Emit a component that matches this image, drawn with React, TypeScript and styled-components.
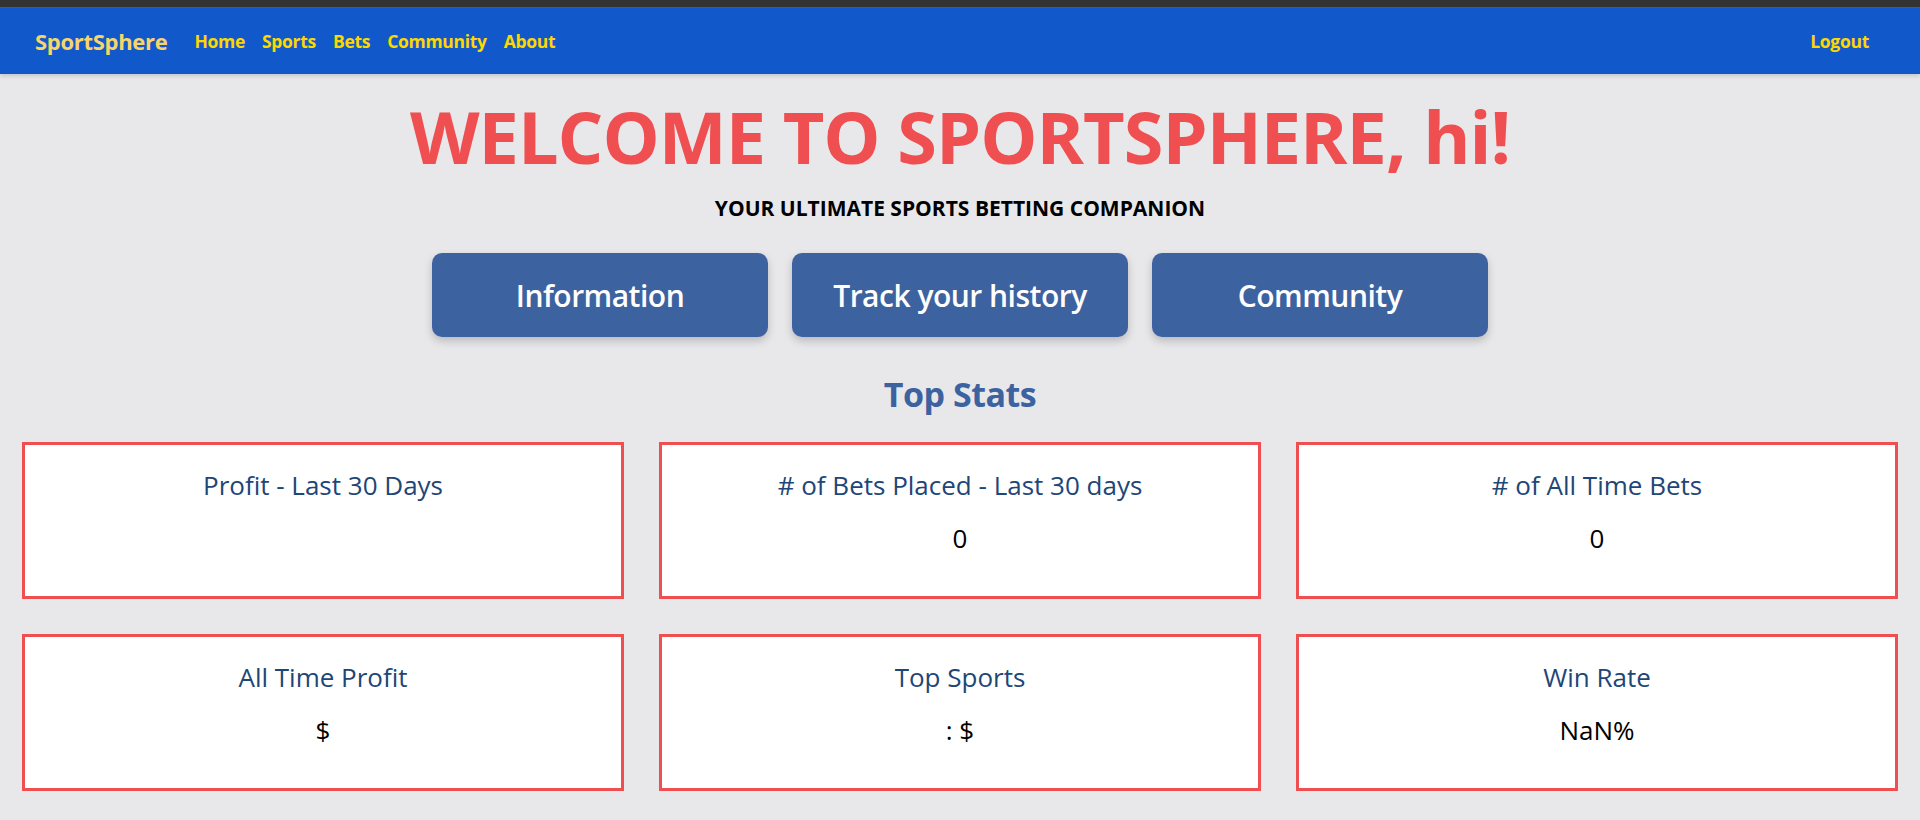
import React from 'react';
import styled, { createGlobalStyle } from 'styled-components';

const GlobalStyle = createGlobalStyle`
  body {
    margin: 0;
    background: #e8e8eb;
    font-family: 'Open Sans', 'Noto Sans', sans-serif;
  }
`;

const WindowStrip = styled.div`
  height: 7px;
  background: #333333;
  border-bottom: 1px solid #5a5a5a;
`;

const Navbar = styled.nav`
  height: 66px;
  background: #1159cb;
  display: flex;
  align-items: center;
  justify-content: space-between;
  padding: 0 51px 0 35px;
  box-shadow: 0 2px 4px rgba(0, 0, 0, 0.15);
`;

const NavLeft = styled.div`
  display: flex;
  align-items: center;
  gap: 17px;
`;

const Brand = styled.a`
  font-size: 22px;
  font-weight: 700;
  color: #f7d56b;
  margin-right: 10px;
  letter-spacing: -0.3px;
`;

const NavLink = styled.a`
  font-size: 17.5px;
  font-weight: 700;
  color: #ffd700;
  letter-spacing: -0.3px;
`;

const Main = styled.main`
  display: flex;
  flex-direction: column;
  align-items: center;
`;

const Title = styled.h1`
  margin: 19px 0 0;
  font-size: 72px;
  line-height: 86px;
  font-weight: 700;
  color: #ef4f50;
  letter-spacing: -1px;
`;

const Subtitle = styled.p`
  margin: 16px 0 0;
  font-size: 21px;
  line-height: 26px;
  font-weight: 700;
  color: #000;
`;

const ButtonRow = styled.div`
  display: flex;
  gap: 24px;
  margin-top: 32px;
`;

const ActionButton = styled.button`
  width: 336px;
  height: 84px;
  border: none;
  border-radius: 10px;
  background: #3d62a0;
  color: #fff;
  font-family: inherit;
  font-size: 30px;
  font-weight: 600;
  letter-spacing: -0.5px;
  box-shadow: 0 4px 8px rgba(0, 0, 0, 0.2);
  cursor: pointer;
`;

const SectionTitle = styled.h2`
  margin: 35px 0 0;
  font-size: 34px;
  line-height: 44px;
  font-weight: 700;
  color: #3d62a0;
  letter-spacing: -0.5px;
`;

const StatsGrid = styled.div`
  display: grid;
  grid-template-columns: repeat(3, 1fr);
  gap: 35px 35px;
  padding: 0 22px;
  margin-top: 26px;
  align-self: stretch;
`;

const StatCard = styled.div`
  height: 157px;
  box-sizing: border-box;
  background: #fff;
  border: 3px solid #ef4f50;
  padding-top: 24px;
  text-align: center;
`;

const StatLabel = styled.h3`
  margin: 0;
  font-size: 26px;
  line-height: 32px;
  font-weight: 500;
  color: #1e4676;
`;

const StatValue = styled.p`
  margin: 21px 0 0;
  font-size: 26px;
  line-height: 32px;
  color: #000;
`;

const stats = [
  { label: 'Profit - Last 30 Days', value: '' },
  { label: '# of Bets Placed - Last 30 days', value: '0' },
  { label: '# of All Time Bets', value: '0' },
  { label: 'All Time Profit', value: '$' },
  { label: 'Top Sports', value: ': $' },
  { label: 'Win Rate', value: 'NaN%' },
];

export default function App() {
  return (
    <>
      <GlobalStyle />
      <WindowStrip />
      <Navbar>
        <NavLeft>
          <Brand>SportSphere</Brand>
          <NavLink>Home</NavLink>
          <NavLink>Sports</NavLink>
          <NavLink>Bets</NavLink>
          <NavLink>Community</NavLink>
          <NavLink>About</NavLink>
        </NavLeft>
        <NavLink>Logout</NavLink>
      </Navbar>
      <Main>
        <Title>WELCOME TO SPORTSPHERE, hi!</Title>
        <Subtitle>YOUR ULTIMATE SPORTS BETTING COMPANION</Subtitle>
        <ButtonRow>
          <ActionButton>Information</ActionButton>
          <ActionButton>Track your history</ActionButton>
          <ActionButton>Community</ActionButton>
        </ButtonRow>
        <SectionTitle>Top Stats</SectionTitle>
        <StatsGrid>
          {stats.map((s) => (
            <StatCard key={s.label}>
              <StatLabel>{s.label}</StatLabel>
              {s.value && <StatValue>{s.value}</StatValue>}
            </StatCard>
          ))}
        </StatsGrid>
      </Main>
    </>
  );
}
